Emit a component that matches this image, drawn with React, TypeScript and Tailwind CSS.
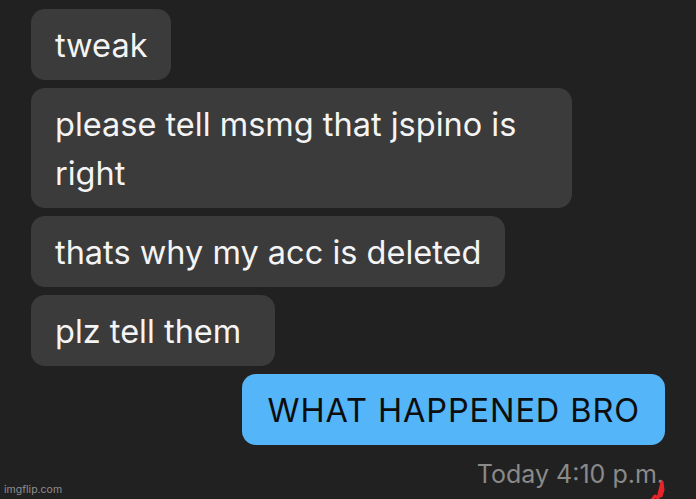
const incoming = [
  { text: "tweak", pr: "pr-6" },
  { text: "please tell msmg that jspino is right", pr: "pr-6" },
  { text: "thats why my acc is deleted", pr: "pr-6" },
  { text: "plz tell them", pr: "pr-[34px]" },
];

export default function App() {
  return (
    <div
      className="relative h-[499px] w-[696px] overflow-hidden bg-[#212121]"
      style={{ fontFamily: "Inter, 'Noto Sans', sans-serif" }}
    >
      <div className="flex flex-col gap-2 px-[31px] pt-[9px]">
        {incoming.map((msg, i) => (
          <div
            key={i}
            className={`w-fit max-w-[541px] rounded-[14px] bg-[#3b3b3b] pt-[12px] pb-[10px] pl-6 text-[32.5px] leading-[49px] text-[#f4f4f4] ${msg.pr}`}
          >
            {msg.text}
          </div>
        ))}

        {/* outgoing */}
        <div className="self-end rounded-[14px] bg-[#55b5f9] px-[25px] pt-[12px] pb-[10px] text-[32.5px] leading-[49px] tracking-[0.9px] text-[#0d0d0d]">
          WHAT HAPPENED BRO
        </div>
        <div className="self-end pr-px pt-[5px] text-[25px] leading-[32px] text-[#8a8a8a]">
          Today 4:10 p.m.
        </div>
      </div>

      {/* red scribble */}
      <svg
        className="absolute left-[650px] top-[480px]"
        width="18"
        height="20"
        viewBox="0 0 18 20"
      >
        <path
          d="M2 20 L5 16 L8 18 L11 6 L12 2 L13 10 L11 16"
          fill="none"
          stroke="#e8232a"
          strokeWidth="3"
          strokeLinecap="round"
          strokeLinejoin="round"
        />
      </svg>

      <div className="absolute bottom-[4px] left-[4px] text-[10.5px] leading-none text-[#8f8f8f]">
        imgflip.com
      </div>
    </div>
  );
}
